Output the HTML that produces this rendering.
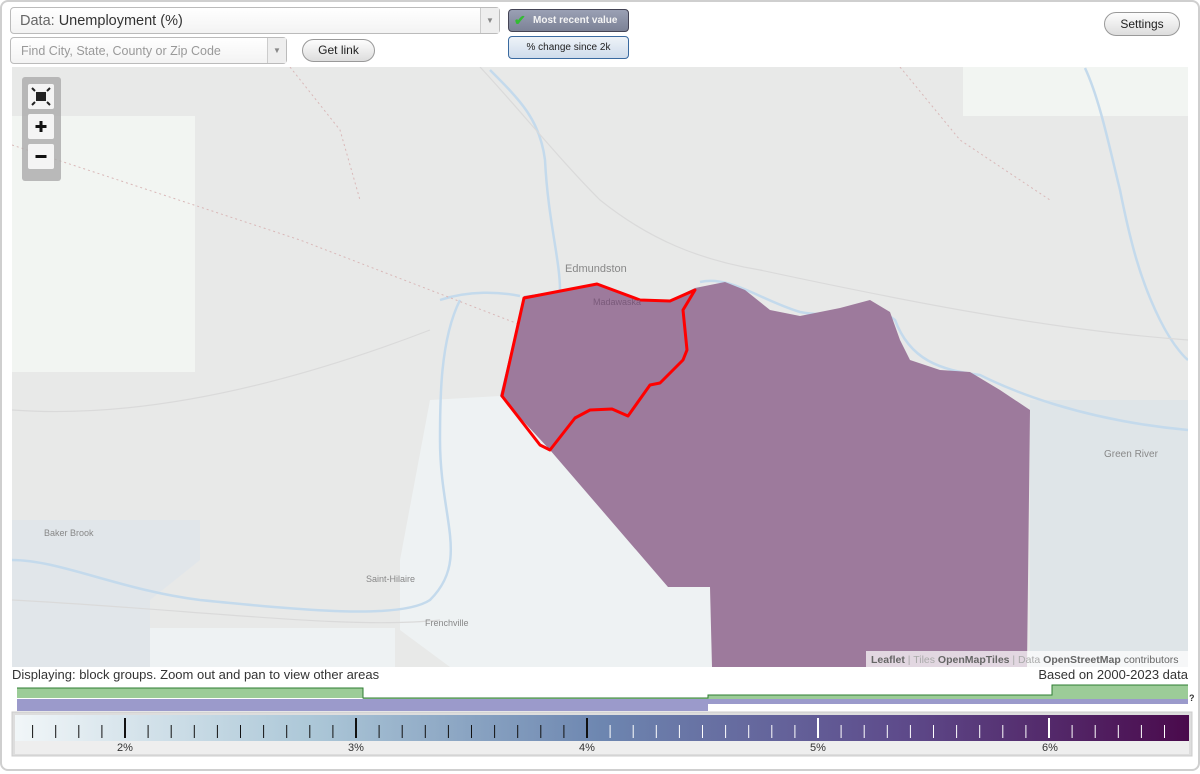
<!DOCTYPE html>
<html><head><style>
*{margin:0;padding:0;box-sizing:border-box}
body{width:1200px;height:771px;background:#fff;font-family:"Liberation Sans",sans-serif;position:relative;overflow:hidden}
.frame{position:absolute;left:0;top:0;width:1200px;height:771px;border:2px solid #cfcfcf;border-radius:8px}
.sel{position:absolute;border:1px solid #bbb;border-radius:4px;background:linear-gradient(#fff,#f3f3f3);font-size:14px;color:#333}
.sel .arr{position:absolute;right:0;top:0;bottom:0;width:19px;border-left:1px solid #ccc;background:#eee;color:#888;font-size:8px;text-align:center}
.btn{position:absolute;border:1px solid #999;border-radius:12px;background:linear-gradient(#fdfdfd,#ddd);font-size:12px;color:#222;text-align:center}
</style></head><body>
<div class="frame"></div>
<div class="sel" style="left:10px;top:7px;width:490px;height:27px;padding:5px 9px;font-size:14.5px"><span style="color:#666">Data:</span> Unemployment (%)<div class="arr" style="line-height:26px">▼</div></div>
<div class="sel" style="left:10px;top:37px;width:277px;height:27px;padding:6px 10px;font-size:12.5px;color:#999">Find City, State, County or Zip Code<div class="arr" style="line-height:26px">▼</div></div>
<div class="btn" style="left:302px;top:39px;width:73px;height:23px;line-height:21px">Get link</div>
<div style="position:absolute;left:508px;top:9px;width:121px;height:23px;border:1px solid #445;border-radius:4px;background:linear-gradient(#9aa0b4,#7c8296);color:#f4f4f4;font-size:10px;font-weight:bold;line-height:21px;padding-left:24px">Most recent value<span style="position:absolute;left:5px;top:0;color:#3b3;font-size:14px">✔</span></div>
<div style="position:absolute;left:508px;top:36px;width:121px;height:23px;border:1px solid #3a6aa0;border-radius:4px;background:linear-gradient(#eef3f8,#cfdcec);color:#222;font-size:10px;line-height:21px;text-align:center">% change since 2k</div>
<div class="btn" style="left:1104px;top:12px;width:76px;height:24px;line-height:22px">Settings</div>

<svg style="position:absolute;left:12px;top:67px" width="1176" height="600" viewBox="12 67 1176 600">
<rect x="12" y="67" width="1176" height="600" fill="#e8e9e8"/>
<rect x="12" y="116" width="183" height="256" fill="#f2f5f2"/>
<rect x="963" y="67" width="225" height="49" fill="#f2f5f2"/>
<rect x="1030" y="400" width="158" height="267" fill="#dfe5e8"/>
<path d="M12 520 L200 520 L200 560 L150 600 L150 667 L12 667Z" fill="#e1e6ea"/>
<path d="M430 400 L500 396 L550 450 L668 587 L710 587 L712 667 L450 667 L400 630 L400 560 Z" fill="#eef2f3"/>
<path d="M150 628 L395 628 L395 667 L150 667Z" fill="#eef2f3"/>
<g fill="none" stroke="#c4daec" stroke-width="2.5">
<path d="M490 70 C520 100 540 120 545 160 C548 220 560 260 560 290"/>
<path d="M440 300 C470 290 500 292 520 296 M700 282 C730 275 760 300 800 312 C840 320 870 300 895 320 C910 360 940 370 980 375 C1010 390 1080 420 1188 430"/>
<path d="M460 300 C440 340 440 400 440 440 C440 520 470 560 430 600 C400 620 300 610 200 600 C120 590 60 560 12 560"/>
<path d="M1085 68 C1100 100 1110 150 1120 190 C1130 240 1140 280 1160 320 C1175 350 1188 360 1188 360"/>
</g>
<g fill="none" stroke="#dadada" stroke-width="1.2">
<path d="M480 67 C520 110 560 160 600 200 C650 240 700 260 760 270 C900 300 1050 330 1188 340"/>
<path d="M12 410 C150 420 300 380 430 330"/>
<path d="M12 600 C200 610 350 630 440 620"/>
</g>
<g fill="none" stroke="#d9b8b8" stroke-width="1" stroke-dasharray="2,3">
<path d="M12 145 L300 240 L560 340"/><path d="M290 67 L340 130 L360 200"/><path d="M900 67 L960 140 L1050 200"/>
</g>
<text x="565" y="272" font-size="11" fill="#888">Edmundston</text>
<text x="1104" y="457" font-size="10" fill="#888">Green River</text>
<text x="44" y="536" font-size="9" fill="#888">Baker Brook</text>
<text x="366" y="582" font-size="9" fill="#888">Saint-Hilaire</text>
<text x="425" y="626" font-size="9" fill="#888">Frenchville</text>
<path d="M524 296 L597 285 L640 300 L670 300 L695 288 L725 282 L745 290 L770 310 L800 316 L840 308 L870 300 L890 312 L900 340 L910 360 L940 370 L970 372 L1000 390 L1030 410 L1027 667 L712 667 L710 587 L668 587 L550 450 L500 396Z" fill="#9d7a9c"/>
<path d="M524 298 L597 284 L640 300 L670 301 L695 290 L683 310 L687 350 L683 360 L660 383 L650 385 L628 416 L612 409 L590 410 L575 418 L550 450 L540 445 L502 396Z" fill="none" stroke="#f00" stroke-width="3" stroke-linejoin="round"/>
<text x="593" y="305" font-size="9" fill="#7a5a7a">Madawaska</text>
<rect x="866" y="651" width="322" height="16" fill="#fff" opacity=".7"/>
<text x="871" y="663" font-size="10.5" fill="#666"><tspan font-weight="bold">Leaflet</tspan><tspan fill="#aaa"> | Tiles </tspan><tspan font-weight="bold">OpenMapTiles</tspan><tspan fill="#aaa"> | Data </tspan><tspan font-weight="bold">OpenStreetMap</tspan> contributors</text>
<rect x="22" y="77" width="39" height="104" rx="3" fill="#aaa" opacity=".8"/>
<rect x="28" y="84" width="26" height="25" rx="2" fill="#f4f4f4"/>
<rect x="28" y="114" width="26" height="25" rx="2" fill="#f4f4f4"/>
<rect x="28" y="144" width="26" height="25" rx="2" fill="#f4f4f4"/>
<rect x="36" y="92" width="10" height="9" fill="#222"/>
<path d="M32 88 l3 3 M50 88 l-3 3 M32 105 l3 -3 M50 105 l-3 -3" stroke="#222" stroke-width="2"/>
<path d="M41 121v11M35.5 126.5h11" stroke="#111" stroke-width="3"/>
<path d="M35.5 156.5h11" stroke="#111" stroke-width="3"/>
</svg>

<div style="position:absolute;left:12px;top:667px;font-size:13px;color:#333">Displaying: block groups. Zoom out and pan to view other areas</div>
<div style="position:absolute;right:12px;top:667px;font-size:13px;color:#333">Based on 2000-2023 data</div>

<svg style="position:absolute;left:0;top:684px" width="1200" height="90">
<rect x="17" y="4" width="346" height="10" fill="#9ccc98"/>
<rect x="363" y="14" width="345" height="1" fill="#9ccc98"/>
<rect x="708" y="11" width="344" height="4" fill="#9ccc98"/>
<rect x="1052" y="1" width="136" height="14" fill="#9ccc98"/>
<path d="M17 4H363V14H708V11H1052V1H1188" fill="none" stroke="#2e7d32" stroke-width="1"/>
<rect x="17" y="15" width="691" height="12" fill="#9b9acb"/>
<rect x="708" y="15" width="344" height="5" fill="#9b9acb"/>
<rect x="1052" y="15" width="136" height="5" fill="#9b9acb"/>
<text x="1189" y="17" font-size="9" font-weight="bold" fill="#333">?</text>
<defs><linearGradient id="g"><stop offset="0" stop-color="#f1f6f8"/><stop offset=".25" stop-color="#adc8d8"/><stop offset=".5" stop-color="#6d86b0"/><stop offset=".75" stop-color="#5e4c8c"/><stop offset="1" stop-color="#4a0a4c"/></linearGradient></defs>
<rect x="12" y="28" width="1180" height="44" fill="#ddd" stroke="#ccc"/>
<rect x="15" y="31" width="1174" height="26" fill="url(#g)"/>
<rect x="15" y="57" width="1174" height="13" fill="#eeeeee"/>
<g id="t"></g>
<g font-size="11" fill="#333" text-anchor="middle">
<text x="125" y="67">2%</text><text x="356" y="67">3%</text><text x="587" y="67">4%</text><text x="818" y="67">5%</text><text x="1050" y="67">6%</text></g>
</svg>
<script>
var g=document.getElementById('t'),s='';
for(var i=-4;i<=46;i++){var x=125+i*23.1;if(x<20||x>1186)continue;var maj=i%10==0;var c=x<600?'#111':'#fff';
s+='<line x1="'+x+'" x2="'+x+'" y1="'+(maj?34:41)+'" y2="54" stroke="'+c+'" stroke-width="'+(maj?2:1)+'"/>';}
g.innerHTML=s;
</script>
</body></html>
